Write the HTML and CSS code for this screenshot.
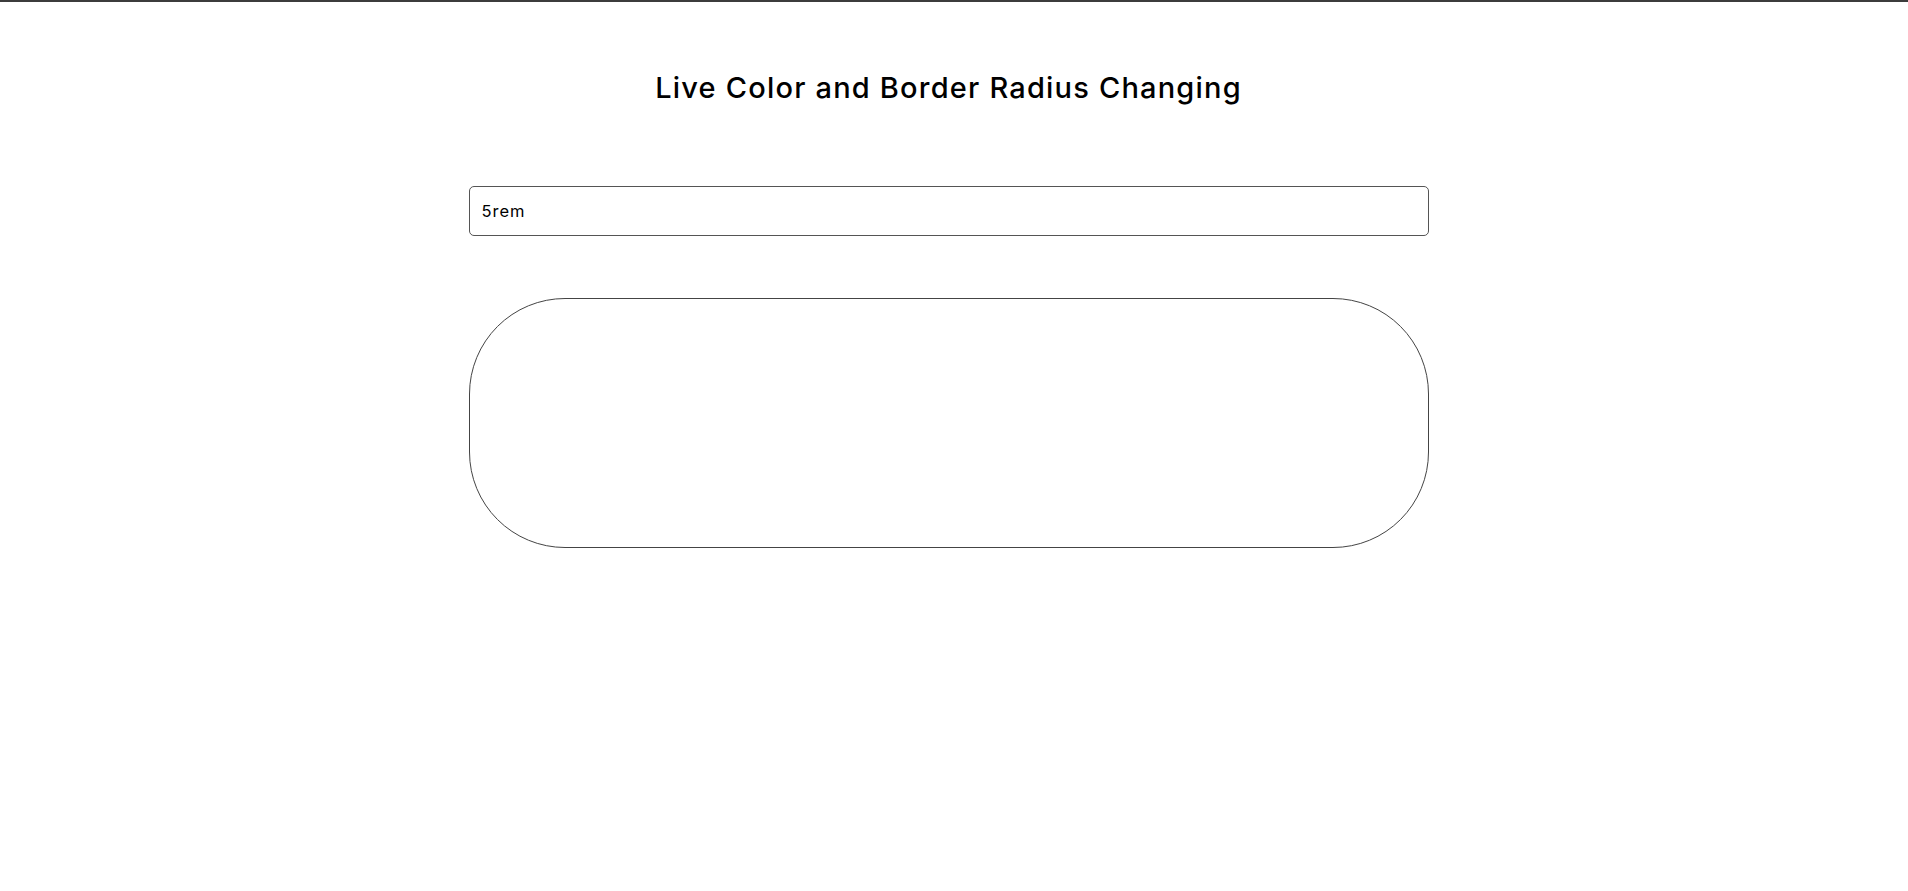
FILE: index.html
```html
<!DOCTYPE html>
<html lang="en">
<head>
<meta charset="UTF-8">
<title>Live Color and Border Radius Changing</title>
<link rel="stylesheet" href="styles.css">
</head>
<body>
<main class="page">
  <h1 class="title">Live Color and Border Radius Changing</h1>
  <input class="field" type="text" value="5rem">
  <div class="preview"></div>
</main>
</body>
</html>
```
FILE: styles.css
```css
html, body {
  margin: 0;
  padding: 0;
  background: #ffffff;
}
body {
  border-top: 2px solid #3c3c3c;
  font-family: "Inter", "Noto Sans", sans-serif;
  color: #000;
}
.page {
  width: 960px;
  margin: 0 auto;
  padding-right: 11px;
  display: flex;
  flex-direction: column;
  align-items: stretch;
}
.title {
  margin: 0;
  padding-top: 68px;
  font-size: 29px;
  font-weight: 500;
  line-height: 36px;
  text-align: center;
  letter-spacing: 1.2px;
}
.field {
  box-sizing: border-box;
  margin-top: 80px;
  height: 50px;
  width: 100%;
  border: 1px solid #555;
  border-radius: 5px;
  padding: 0 12px;
  font-family: "Inter", "Noto Sans", sans-serif;
  font-size: 16.5px;
  letter-spacing: 1px;
  color: #000;
  outline: none;
}
.preview {
  box-sizing: border-box;
  margin-top: 62px;
  height: 250px;
  border: 1px solid #444;
  border-radius: 96px;
}
```
